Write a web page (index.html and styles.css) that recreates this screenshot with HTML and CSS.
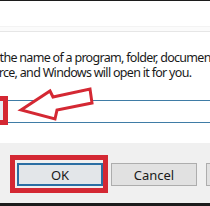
FILE: index.html
```html
<!DOCTYPE html>
<html lang="en">
<head>
    <meta charset="UTF-8">
    <title>Run</title>
    <link rel="stylesheet" href="styles.css">
</head>
<body>
    <div class="window">
        <div class="top-edge"></div>
        <div class="titlebar"></div>
        <div class="divider"></div>

        <div class="content">
            <div class="hint">
                <div class="hint-line first">Type the name of a program, folder, document, or Internet</div>
                <div class="hint-line second">resource, and Windows will open it for you.</div>
            </div>
            <div class="field"></div>
            <div class="field-mark"></div>
        </div>

        <div class="footer">
            <div class="mark">
                <button class="btn btn-default">OK</button>
            </div>
            <button class="btn btn-cancel">Cancel</button>
            <button class="btn btn-browse">Browse...</button>
        </div>
        <div class="bottom-edge"></div>

        <!-- red arrow pointing at the field -->
        <svg class="arrow" width="210" height="206" viewBox="0 0 210 206">
            <polygon points="21,110 50,91 53,97 90,89 92,103 57,110 55,119"
                     fill="#fff" stroke="#d42833" stroke-width="3" stroke-linejoin="miter"/>
        </svg>
    </div>
</body>
</html>
```

FILE: styles.css
```css
body {
    margin: 0;
    background-color: #fff;
}

.window {
    position: relative;
    width: 210px;
    height: 206px;
    overflow: hidden;
    background-color: #fff;
    font-family: "Noto Sans", "Open Sans", sans-serif;
    color: #1a1a1a;
}

.top-edge {
    height: 1px;
    background-color: #1c1c1c;
}

.titlebar {
    height: 25px;
}

.divider {
    height: 4px;
    background-color: #fbfbfb;
    border-top: 1px solid #f3f3f3;
    border-bottom: 1px solid #e6e6e6;
}

.content {
    position: relative;
    height: 111px;
}

.hint {
    padding-top: 18px;
    font-size: 12.5px;
    line-height: 15px;
    letter-spacing: -0.7px;
    white-space: nowrap;
}

.hint-line.first {
    margin-left: -28px;
}

.hint-line.second {
    margin-left: -31px;
}

.field {
    margin: 20px 0 0 8px;
    height: 21px;
    border-top: 1px solid #3f7ca6;
    border-bottom: 1px solid #3f7ca6;
}

.field-mark {
    position: absolute;
    left: -30px;
    top: 64px;
    width: 28px;
    height: 19px;
    border: 5px solid #d42833;
    background-color: #e4eef5;
}

.footer {
    display: flex;
    align-items: flex-start;
    height: 48px;
    padding: 12px 0 0 10px;
    background-color: #f0f0f0;
}

.mark {
    flex-shrink: 0;
    border: 5px solid #d42833;
    padding: 3px 0 2px 2px;
}

.btn {
    flex-shrink: 0;
    box-sizing: border-box;
    width: 86px;
    height: 23px;
    padding: 0;
    font-family: "Noto Sans", "Open Sans", sans-serif;
    font-size: 13px;
    color: #1a1a1a;
    background-color: #e1e1e1;
    border: 1px solid #adadad;
}

.btn-default {
    display: block;
    background-color: #e3e6e9;
    border: 2px solid #2b6ea3;
}

.btn-cancel {
    margin: 8px 0 0 3px;
}

.btn-browse {
    margin: 8px 0 0 9px;
}

.bottom-edge {
    height: 3px;
    background-color: #1c1c1c;
}

.arrow {
    position: absolute;
    left: 0;
    top: 0;
}
```
